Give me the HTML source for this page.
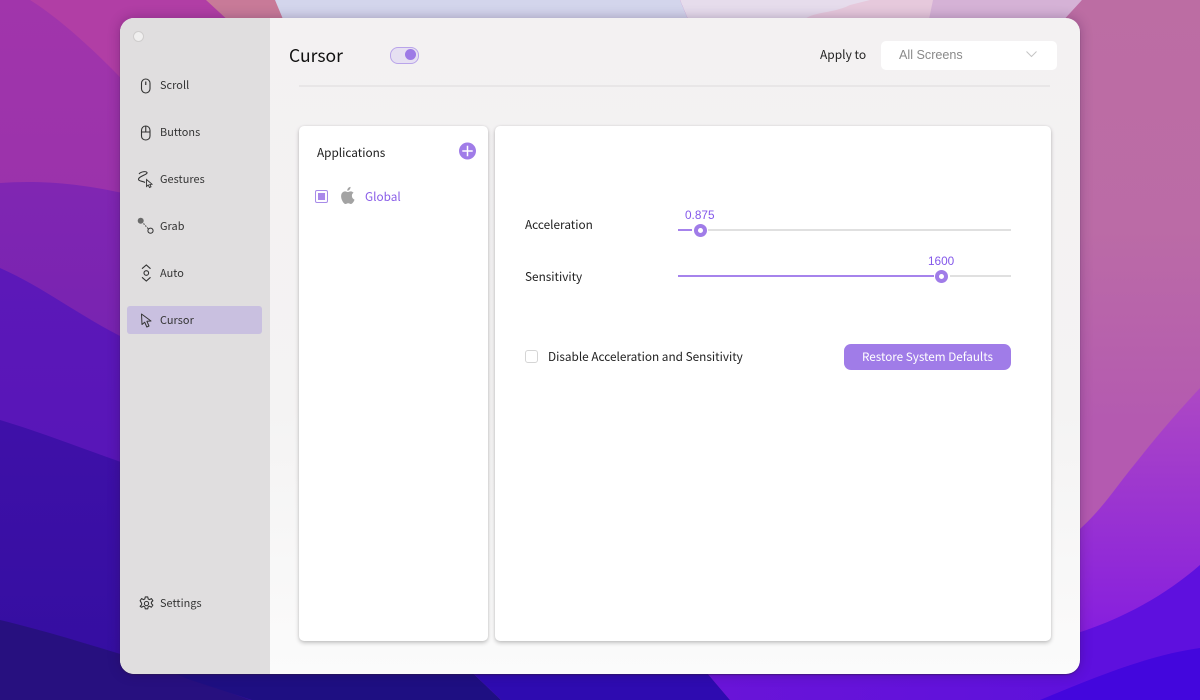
<!DOCTYPE html>
<html><head><meta charset="utf-8"><style>
html,body{margin:0;padding:0;width:1200px;height:700px;overflow:hidden;background:#3a10c0}
body{position:relative;font-family:"Noto Sans CJK SC","Liberation Sans",sans-serif;color:#222}
.a{position:absolute}
.t{position:absolute;white-space:nowrap;line-height:18px;height:18px}
.side{font-size:10.9px;color:#333;left:160px;letter-spacing:.05px}
svg{position:absolute;overflow:visible}
</style></head><body>
<svg class="a" style="left:0;top:0" width="1200" height="700" viewBox="0 0 1200 700">
<defs>
<linearGradient id="g1" x1="0" y1="0" x2="0" y2="1"><stop offset="0" stop-color="#a135ab"/><stop offset="1" stop-color="#8a2cab"/></linearGradient>
<linearGradient id="g2" x1="0" y1="0" x2="0" y2="1"><stop offset="0" stop-color="#8026b2"/><stop offset="1" stop-color="#7422b0"/></linearGradient>
<linearGradient id="g3" x1="0" y1="0" x2="0" y2="1"><stop offset="0" stop-color="#5c18b8"/><stop offset="1" stop-color="#5715b8"/></linearGradient>
<linearGradient id="g4" x1="0" y1="0" x2="0" y2="1"><stop offset="0" stop-color="#3f10a8"/><stop offset="1" stop-color="#330ea0"/></linearGradient>
<linearGradient id="gr" x1="0" y1="0" x2="0" y2="1"><stop offset="0" stop-color="#bc6da3"/><stop offset=".55" stop-color="#bb6ba6"/><stop offset="1" stop-color="#b45ab0"/></linearGradient>
<linearGradient id="gr2" x1="0" y1="0" x2="0" y2="1"><stop offset="0" stop-color="#ad48c4"/><stop offset="1" stop-color="#851ddf"/></linearGradient>
<linearGradient id="gb" x1="0" y1="0" x2="1" y2="0"><stop offset="0" stop-color="#6a14d8"/><stop offset="1" stop-color="#5a10dc"/></linearGradient>
</defs>
<rect width="1200" height="700" fill="url(#g1)"/>
<path d="M30 0C70 25 120 75 150 110L250 110 250 0Z" fill="#b13ea5"/>
<path d="M206 0L232 24 290 24 275 0Z" fill="#c87a98"/>
<path d="M275 0H680L690 24H285Z" fill="#d3d5ec"/>
<path d="M680 0H940L930 24H690Z" fill="#e6dcec"/>
<path d="M800 24C810 10 830 15 850 5L870 0H940L930 24Z" fill="#e6c9dc"/>
<path d="M933 0H1082L1067 24H928Z" fill="#d5b2d6"/>
<path d="M1082 0H1200V420H1060V24Z" fill="url(#gr)"/>
<path d="M0 183C40 180 90 183 150 200L300 240V420H0Z" fill="url(#g2)"/>
<path d="M0 268C50 290 90 325 150 350L300 400V500H0Z" fill="url(#g3)"/>
<path d="M0 420C50 435 90 452 150 472L300 500V700H0Z" fill="url(#g4)"/>
<path d="M0 620C50 632 90 645 140 660L250 700H0Z" fill="#27107f"/>
<path d="M140 660L191 680 252 700H501L459 660Z" fill="#1e0f82"/>
<path d="M459 660H696L730 700H501Z" fill="#2e0bb0"/>
<path d="M696 660H1200V700H730Z" fill="url(#gb)"/>
<path d="M1060 420H1200V600H1060Z" fill="#b45ab0"/>
<path d="M1200 388C1170 420 1150 445 1130 470C1110 495 1095 520 1060 545V640H1200Z" fill="url(#gr2)"/>
<path d="M1200 565C1160 600 1110 625 1060 638V700H1200Z" fill="#5e10de"/>
<path d="M1200 648C1150 655 1100 675 1040 700H1200Z" fill="#4306dd"/>
</svg>

<div class="a" style="left:120px;top:18px;width:960px;height:656px;border-radius:14px;overflow:hidden;background:linear-gradient(#f3f1f2 0,#f4f3f3 60%,#fbfbfb 100%);box-shadow:0 0 12px rgba(40,10,60,.3),0 1px 1px rgba(50,30,70,.5)">
<div class="a" style="left:0;top:0;width:150px;height:656px;background:#e0dedf"></div>
<div class="a" style="left:13px;top:13px;width:9px;height:9px;border-radius:50%;background:#f0efef;border:1px solid #cfcdcd"></div>
<div class="a" style="left:7px;top:288px;width:135px;height:28px;border-radius:3px;background:#c9c0e0"></div>
</div>

<!-- sidebar icons -->
<svg style="left:140px;top:78px" width="12" height="16" viewBox="0 0 12 16" fill="none" stroke="#333" stroke-width="1.1"><rect x="1.5" y="1" width="8.5" height="14" rx="4.2"/><path d="M5.75 3.5v3.5" stroke-width="1.2"/></svg>
<svg style="left:140px;top:125px" width="12" height="16" viewBox="0 0 12 16" fill="none" stroke="#333" stroke-width="1.1"><path d="M1.5 5.5C1.5 3 3.2 1 5.75 1S10 3 10 5.5V11C10 13.4 8.2 15 5.75 15S1.5 13.4 1.5 11ZM1.5 7H10M5.75 1V7"/></svg>
<svg style="left:137px;top:170px" width="20" height="19" viewBox="0 0 20 19" fill="none" stroke="#333" stroke-width="1.1"><path d="M2 4C4 1.5 9 1 10 2.5 11 4.5 1 6.5 1.5 9.5 2 11.5 6 11 8 12.5"/><path d="M9.5 9.5L9.5 16.5 11.2 15 12.5 17.5 14 16.8 12.8 14.5 15 14.2Z" stroke-width=".9" fill="#e0dedf"/></svg>
<svg style="left:137px;top:217px" width="19" height="18" viewBox="0 0 19 18"><circle cx="3.7" cy="3.8" r="3" fill="#6a6a6a"/><path d="M6.5 6.5L11.5 12" stroke="#444" stroke-width="1" stroke-dasharray="1.5 1.2"/><circle cx="13.5" cy="13.7" r="2.6" fill="none" stroke="#333" stroke-width="1"/></svg>
<svg style="left:140px;top:264px" width="13" height="18" viewBox="0 0 13 18" fill="none" stroke="#333" stroke-width="1.1"><path d="M2 4.7L6.3 1 10.5 4.7M2 13.3L6.3 17 10.5 13.3"/><circle cx="6.3" cy="9" r="2.3"/></svg>
<svg style="left:140px;top:313px" width="14" height="15" viewBox="0 0 14 15" fill="none" stroke="#333" stroke-width="1" stroke-linejoin="round"><path d="M1.5 1L2 11.5 4.7 9.2 6.8 14 9 13 6.9 8.3 11 8Z"/></svg>
<svg style="left:139px;top:596px" width="15" height="15" viewBox="0 0 24 24" fill="none" stroke="#333" stroke-width="1.7" stroke-linejoin="round"><circle cx="12" cy="12" r="3.4"/><path d="M10 1.5h4l.7 3.3 2.2 1 2.9-1.7 2.4 3.4-2.4 2.4v2.3l2.4 2.4-2.4 3.4-2.9-1.7-2.2 1-.7 3.2h-4l-.7-3.2-2.2-1-2.9 1.7L1.8 16.4l2.4-2.4v-2.3L1.8 7.5 4.2 4.1l2.9 1.7 2.2-1z"/></svg>

<div class="t side" style="top:76px">Scroll</div>
<div class="t side" style="top:123px">Buttons</div>
<div class="t side" style="top:170px">Gestures</div>
<div class="t side" style="top:217px">Grab</div>
<div class="t side" style="top:264px">Auto</div>
<div class="t side" style="top:311px">Cursor</div>
<div class="t side" style="top:594px">Settings</div>

<!-- header -->
<div class="t" style="left:289px;top:44px;font-size:17.5px;line-height:24px;height:24px;color:#111">Cursor</div>
<div class="a" style="left:390px;top:47px;width:27px;height:15px;border-radius:8px;background:#e6e0f2;border:1px solid #b9a4ea"></div>
<div class="a" style="left:405px;top:49px;width:11px;height:11px;border-radius:50%;background:#9d7ae6"></div>
<div class="t" style="left:820px;top:46px;font-size:12px;color:#222">Apply to</div>
<div class="a" style="left:881px;top:41px;width:176px;height:29px;border-radius:5px;background:#fff"></div>
<div class="t" style="left:899px;top:46px;font:12.6px/18px 'Liberation Sans',sans-serif;color:#8a8a8a">All Screens</div>
<svg style="left:1026px;top:51px" width="11" height="7" viewBox="0 0 11 7" fill="none" stroke="#c4c4c4" stroke-width="1"><path d="M.5 .5L5.5 5.5 10.5 .5"/></svg>
<div class="a" style="left:299px;top:85px;width:751px;height:2px;background:#e8e6e7"></div>

<!-- left card -->
<div class="a" style="left:299px;top:126px;width:189px;height:515px;border-radius:5px;background:#fff;box-shadow:0 2px 4px rgba(0,0,0,.22),0 0 2px rgba(0,0,0,.08)"></div>
<div class="t" style="left:317px;top:144px;font-size:11.8px;color:#1c1c1c">Applications</div>
<svg style="left:459px;top:142px" width="18" height="18" viewBox="0 0 18 18"><circle cx="8.5" cy="9" r="8.5" fill="#a07ce8"/><path d="M8.5 3.8v10.4M3.3 9h10.4" stroke="#fff" stroke-width="1.5"/></svg>
<div class="a" style="left:315px;top:190px;width:11px;height:11px;border:1px solid #a78be8;border-radius:2px;background:#fdfcff"></div>
<div class="a" style="left:318px;top:193px;width:7px;height:7px;background:#a988ea"></div>
<svg style="left:339px;top:187px" width="16" height="18" viewBox="0 0 16 18"><path fill="#a3a3a3" d="M13.3 9.5c0-2 1.6-2.9 1.7-3-1-1.3-2.4-1.5-2.9-1.5-1.2-.1-2.4.7-3 .7s-1.600-.7-2.700-.7C5 5 3.700 5.800 2.900 7c-1.500 2.700-.4 6.600 1.100 8.800.7 1 1.600 2.200 2.700 2.200 1.100 0 1.500-.7 2.800-.7s1.700.7 2.800.7 1.900-1 2.600-2.100c.8-1.200 1.100-2.300 1.100-2.400-.1 0-2.700-1-2.700-4zM11 3.100c.6-.7 1-1.700.9-2.700-.9 0-1.900.6-2.500 1.300-.5.600-1 1.600-.9 2.600 1 .1 1.900-.5 2.500-1.200z" transform="translate(0,-.5) scale(.97)"/></svg>
<div class="t" style="left:365px;top:188px;font-size:11.8px;color:#8a5ee8">Global</div>

<!-- right card -->
<div class="a" style="left:495px;top:126px;width:556px;height:515px;border-radius:5px;background:#fff;box-shadow:0 2px 4px rgba(0,0,0,.22),0 0 2px rgba(0,0,0,.08)"></div>
<div class="t" style="left:525px;top:216px;font-size:11.8px;color:#222">Acceleration</div>
<div class="t" style="left:525px;top:268px;font-size:11.8px;color:#222">Sensitivity</div>
<div class="t" style="left:685px;top:206px;font:11.8px/18px 'Liberation Sans',sans-serif;color:#8458ea">0.875</div>
<div class="t" style="left:928px;top:252px;font:11.8px/18px 'Liberation Sans',sans-serif;color:#8458ea">1600</div>

<div class="a" style="left:678px;top:229px;width:333px;height:2px;background:#e0e0e0"></div>
<div class="a" style="left:678px;top:229px;width:14px;height:2px;background:#a683ec"></div>
<div class="a" style="left:692px;top:224px;width:16px;height:13px;background:#fff"></div>
<div class="a" style="left:694px;top:224px;width:5px;height:5px;border-radius:50%;border:4px solid #a07ce8;background:#fff"></div>

<div class="a" style="left:678px;top:275px;width:333px;height:2px;background:#e0e0e0"></div>
<div class="a" style="left:678px;top:275px;width:256px;height:2px;background:#a683ec"></div>
<div class="a" style="left:934px;top:270px;width:16px;height:13px;background:#fff"></div>
<div class="a" style="left:935px;top:270px;width:5px;height:5px;border-radius:50%;border:4px solid #a07ce8;background:#fff"></div>

<div class="a" style="left:525px;top:350px;width:11px;height:11px;border:1px solid #d5d5d5;border-radius:3px;background:#fff"></div>
<div class="t" style="left:548px;top:348px;font-size:11.8px;color:#222">Disable Acceleration and Sensitivity</div>
<div class="a" style="left:844px;top:344px;width:167px;height:26px;border-radius:7px;background:#a07ce8"></div>
<div class="t" style="left:844px;width:167px;text-align:center;top:348px;font-size:11.7px;color:#fff">Restore System Defaults</div>
</body></html>
